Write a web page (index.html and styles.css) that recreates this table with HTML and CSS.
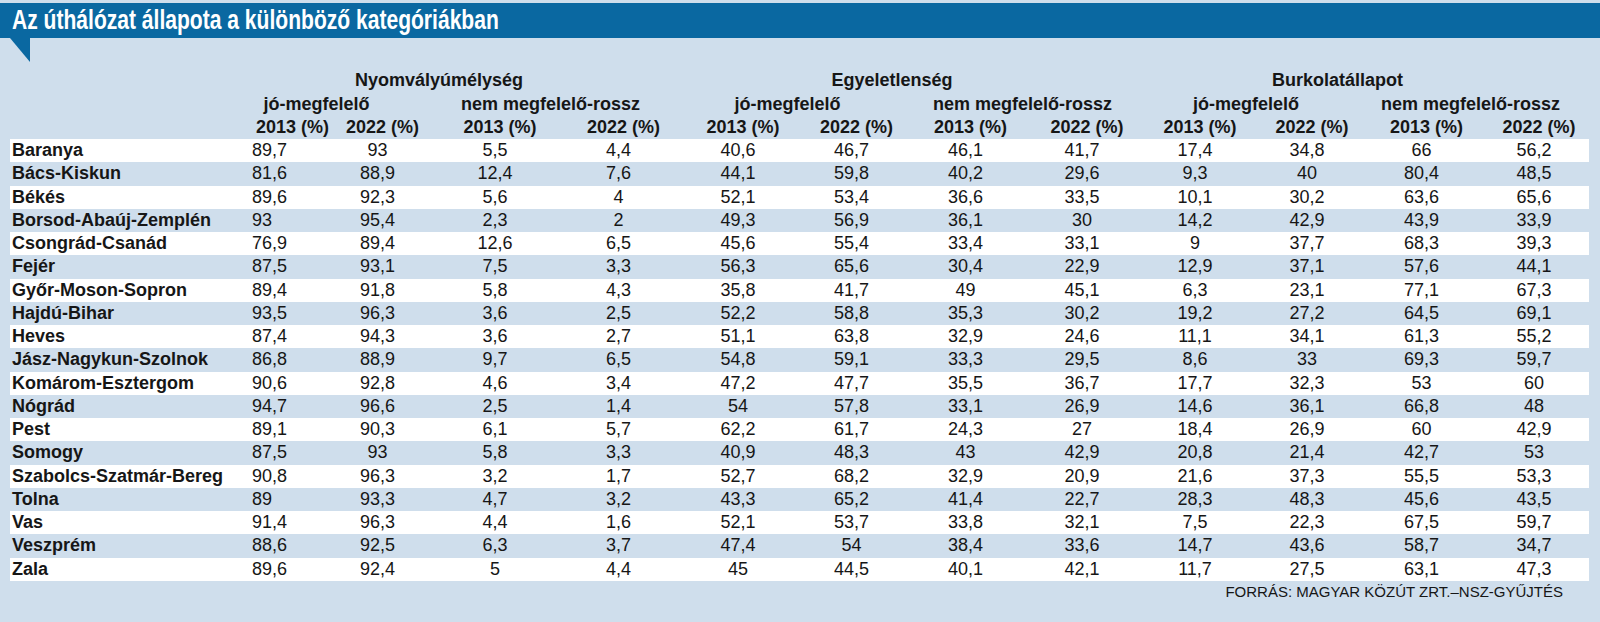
FILE: index.html
```html
<!DOCTYPE html>
<html lang="hu">
<head>
<meta charset="utf-8">
<title>Az úthálózat állapota a különböző kategóriákban</title>
<link rel="stylesheet" href="styles.css">
</head>
<body>
<div class="page">
  <div class="titlebar"><h1 class="title">Az úthálózat állapota a különböző kategóriákban</h1></div>
  <div class="notch"></div>
  <table class="data">
    <colgroup>
      <col class="w-name"><col class="w1"><col class="w2"><col class="w3"><col class="w4"><col class="w5"><col class="w6"><col class="w7"><col class="w8"><col class="w9"><col class="w10"><col class="w11"><col class="w12">
    </colgroup>
    <thead>
      <tr class="hrow">
        <th></th>
        <th colspan="4" class="grp g1">Nyomvályúmélység</th>
        <th colspan="4" class="grp g2">Egyeletlenség</th>
        <th colspan="4" class="grp g3">Burkolatállapot</th>
      </tr>
      <tr class="hrow">
        <th></th>
        <th colspan="2" class="sub s1">jó-megfelelő</th>
        <th colspan="2" class="sub">nem megfelelő-rossz</th>
        <th colspan="2" class="sub">jó-megfelelő</th>
        <th colspan="2" class="sub s4">nem megfelelő-rossz</th>
        <th colspan="2" class="sub">jó-megfelelő</th>
        <th colspan="2" class="sub">nem megfelelő-rossz</th>
      </tr>
      <tr class="hrow last">
        <th></th>
        <th class="yr first">2013 (%)</th><th class="yr">2022 (%)</th><th class="yr">2013 (%)</th><th class="yr">2022 (%)</th>
        <th class="yr">2013 (%)</th><th class="yr">2022 (%)</th><th class="yr">2013 (%)</th><th class="yr">2022 (%)</th>
        <th class="yr">2013 (%)</th><th class="yr">2022 (%)</th><th class="yr">2013 (%)</th><th class="yr">2022 (%)</th>
      </tr>
    </thead>
    <tbody>
      <tr><th>Baranya</th><td class="c1">89,7</td><td>93</td><td>5,5</td><td>4,4</td><td>40,6</td><td>46,7</td><td>46,1</td><td>41,7</td><td>17,4</td><td>34,8</td><td>66</td><td>56,2</td></tr>
      <tr><th>Bács-Kiskun</th><td class="c1">81,6</td><td>88,9</td><td>12,4</td><td>7,6</td><td>44,1</td><td>59,8</td><td>40,2</td><td>29,6</td><td>9,3</td><td>40</td><td>80,4</td><td>48,5</td></tr>
      <tr><th>Békés</th><td class="c1">89,6</td><td>92,3</td><td>5,6</td><td>4</td><td>52,1</td><td>53,4</td><td>36,6</td><td>33,5</td><td>10,1</td><td>30,2</td><td>63,6</td><td>65,6</td></tr>
      <tr><th>Borsod-Abaúj-Zemplén</th><td class="c1">93</td><td>95,4</td><td>2,3</td><td>2</td><td>49,3</td><td>56,9</td><td>36,1</td><td>30</td><td>14,2</td><td>42,9</td><td>43,9</td><td>33,9</td></tr>
      <tr><th>Csongrád-Csanád</th><td class="c1">76,9</td><td>89,4</td><td>12,6</td><td>6,5</td><td>45,6</td><td>55,4</td><td>33,4</td><td>33,1</td><td>9</td><td>37,7</td><td>68,3</td><td>39,3</td></tr>
      <tr><th>Fejér</th><td class="c1">87,5</td><td>93,1</td><td>7,5</td><td>3,3</td><td>56,3</td><td>65,6</td><td>30,4</td><td>22,9</td><td>12,9</td><td>37,1</td><td>57,6</td><td>44,1</td></tr>
      <tr><th>Győr-Moson-Sopron</th><td class="c1">89,4</td><td>91,8</td><td>5,8</td><td>4,3</td><td>35,8</td><td>41,7</td><td>49</td><td>45,1</td><td>6,3</td><td>23,1</td><td>77,1</td><td>67,3</td></tr>
      <tr><th>Hajdú-Bihar</th><td class="c1">93,5</td><td>96,3</td><td>3,6</td><td>2,5</td><td>52,2</td><td>58,8</td><td>35,3</td><td>30,2</td><td>19,2</td><td>27,2</td><td>64,5</td><td>69,1</td></tr>
      <tr><th>Heves</th><td class="c1">87,4</td><td>94,3</td><td>3,6</td><td>2,7</td><td>51,1</td><td>63,8</td><td>32,9</td><td>24,6</td><td>11,1</td><td>34,1</td><td>61,3</td><td>55,2</td></tr>
      <tr><th>Jász-Nagykun-Szolnok</th><td class="c1">86,8</td><td>88,9</td><td>9,7</td><td>6,5</td><td>54,8</td><td>59,1</td><td>33,3</td><td>29,5</td><td>8,6</td><td>33</td><td>69,3</td><td>59,7</td></tr>
      <tr><th>Komárom-Esztergom</th><td class="c1">90,6</td><td>92,8</td><td>4,6</td><td>3,4</td><td>47,2</td><td>47,7</td><td>35,5</td><td>36,7</td><td>17,7</td><td>32,3</td><td>53</td><td>60</td></tr>
      <tr><th>Nógrád</th><td class="c1">94,7</td><td>96,6</td><td>2,5</td><td>1,4</td><td>54</td><td>57,8</td><td>33,1</td><td>26,9</td><td>14,6</td><td>36,1</td><td>66,8</td><td>48</td></tr>
      <tr><th>Pest</th><td class="c1">89,1</td><td>90,3</td><td>6,1</td><td>5,7</td><td>62,2</td><td>61,7</td><td>24,3</td><td>27</td><td>18,4</td><td>26,9</td><td>60</td><td>42,9</td></tr>
      <tr><th>Somogy</th><td class="c1">87,5</td><td>93</td><td>5,8</td><td>3,3</td><td>40,9</td><td>48,3</td><td>43</td><td>42,9</td><td>20,8</td><td>21,4</td><td>42,7</td><td>53</td></tr>
      <tr><th>Szabolcs-Szatmár-Bereg</th><td class="c1">90,8</td><td>96,3</td><td>3,2</td><td>1,7</td><td>52,7</td><td>68,2</td><td>32,9</td><td>20,9</td><td>21,6</td><td>37,3</td><td>55,5</td><td>53,3</td></tr>
      <tr><th>Tolna</th><td class="c1">89</td><td>93,3</td><td>4,7</td><td>3,2</td><td>43,3</td><td>65,2</td><td>41,4</td><td>22,7</td><td>28,3</td><td>48,3</td><td>45,6</td><td>43,5</td></tr>
      <tr><th>Vas</th><td class="c1">91,4</td><td>96,3</td><td>4,4</td><td>1,6</td><td>52,1</td><td>53,7</td><td>33,8</td><td>32,1</td><td>7,5</td><td>22,3</td><td>67,5</td><td>59,7</td></tr>
      <tr><th>Veszprém</th><td class="c1">88,6</td><td>92,5</td><td>6,3</td><td>3,7</td><td>47,4</td><td>54</td><td>38,4</td><td>33,6</td><td>14,7</td><td>43,6</td><td>58,7</td><td>34,7</td></tr>
      <tr><th>Zala</th><td class="c1">89,6</td><td>92,4</td><td>5</td><td>4,4</td><td>45</td><td>44,5</td><td>40,1</td><td>42,1</td><td>11,7</td><td>27,5</td><td>63,1</td><td>47,3</td></tr>
    </tbody>
  </table>
  <p class="source">FORRÁS: MAGYAR KÖZÚT ZRT.–NSZ-GYŰJTÉS</p>
</div>
</body>
</html>
```

FILE: styles.css
```css
html, body {
  margin: 0;
  padding: 0;
  background: #cfdeec;
}

.page {
  width: 1600px;
  height: 622px;
  padding-top: 3px;
  box-sizing: border-box;
  background: #cfdeec;
  font-family: "Liberation Sans", Arial, sans-serif;
  color: #161616;
  overflow: hidden;
}

.titlebar {
  height: 35px;
  background: #0a68a1;
  display: flex;
  align-items: center;
  padding-left: 12px;
}

.title {
  margin: 0;
  font-family: "Liberation Sans", Arial, sans-serif;
  font-size: 27px;
  font-weight: bold;
  color: #ffffff;
  line-height: 35px;
  white-space: nowrap;
  transform: scaleX(0.78);
  transform-origin: left center;
}

.notch {
  width: 20px;
  height: 24px;
  margin-left: 10px;
  background: #0a68a1;
  clip-path: polygon(0 0, 100% 0, 100% 100%);
}

.data {
  margin: 6px 0 0 10px;
  width: 1579px;
  table-layout: fixed;
  border-collapse: collapse;
  border-spacing: 0;
  font-size: 18px;
}

.w-name { width: 210px; }
.w1 { width: 102px; }
.w2 { width: 111px; }
.w3 { width: 124px; }
.w4 { width: 123px; }
.w5 { width: 116px; }
.w6 { width: 111px; }
.w7 { width: 117px; }
.w8 { width: 116px; }
.w9 { width: 110px; }
.w10 { width: 114px; }
.w11 { width: 115px; }
.w12 { width: 110px; }

.hrow th {
  height: 24px;
  padding: 0;
  line-height: 24px;
  font-weight: bold;
  white-space: nowrap;
  text-align: center;
}

.hrow.last th {
  height: 23px;
  line-height: 23px;
}

.g1 { padding-right: 22px !important; }
.g2 { padding-right: 36px !important; }
.g3 { padding-right: 54px !important; }
.sub { padding-right: 12px !important; }
.s1 { padding-right: 20px !important; }
.s4 { padding-right: 2px !important; }
.yr { padding-left: 10px !important; }
.yr.first { padding-left: 36px !important; }

tbody tr {
  height: 23.25px;
}

tbody tr:nth-child(odd) {
  background: #ffffff;
}

tbody th {
  text-align: left;
  font-weight: bold;
  padding: 0 0 0 2px;
  line-height: 23px;
  white-space: nowrap;
}

tbody td {
  text-align: center;
  padding: 0;
  line-height: 23px;
  white-space: nowrap;
}

tbody td.c1 {
  text-align: left;
  padding-left: 32px;
}

.source {
  margin: 0;
  width: 1563px;
  text-align: right;
  font-size: 15px;
  line-height: 22px;
  color: #161616;
}
```
